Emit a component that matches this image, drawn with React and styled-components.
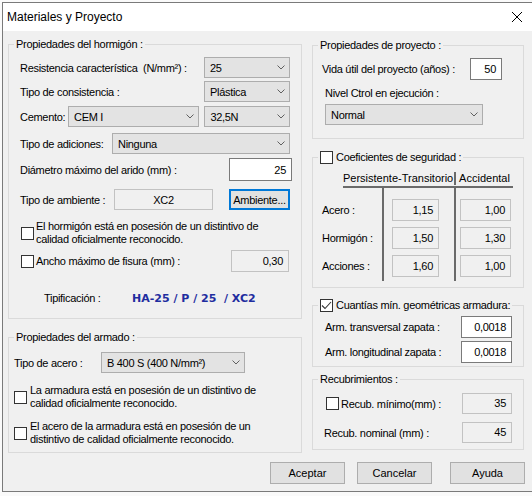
import React from "react"
import styled, { createGlobalStyle } from "styled-components"

const GlobalStyle = createGlobalStyle`
  html, body {
    margin: 0;
    padding: 0;
    background: #fafafa;
    overflow: hidden;
  }
  * { box-sizing: border-box; }
  body {
    font-family: "Liberation Sans", Arial, sans-serif;
    font-size: 11px;
    color: #000;
  }
`

const Window = styled.div`
  margin: 2px 0 0 2px;
  width: 538px;
  height: 490px;
  border: 1px solid #7a7a7a;
  border-right: none;
  background: #f0f0f0;
  display: flex;
  flex-direction: column;
`

const TitleBar = styled.div`
  height: 28px;
  background: #fff;
  display: flex;
  align-items: center;
  justify-content: space-between;
  padding-left: 4px;
  font-size: 12px;
`

const CloseButton = styled.div`
  width: 46px;
  height: 28px;
  display: flex;
  align-items: center;
  justify-content: center;
`

const Body = styled.div`
  padding: 6px 0 0 5px;
  display: flex;
  flex-direction: column;
  letter-spacing: -0.3px;
`

const Columns = styled.div`
  display: flex;
  gap: 10px;
  align-items: flex-start;
`

const Column = styled.div`
  width: ${p => p.$w}px;
  margin-top: ${p => p.$mt || 0}px;
  display: flex;
  flex-direction: column;
`

const Group = styled.fieldset`
  margin: ${p => p.$mt || 0}px 0 0;
  padding: 0 ${p => p.$pr || 0}px ${p => p.$pb || 0}px ${p => p.$pl || 0}px;
  border: 1px solid #dadada;
  min-width: 0;
`

// legend sits at the content edge, so the offset undoes the group's padding
const Legend = styled.legend`
  margin-left: ${p => p.$ml ?? 0}px;
  padding: 0 2px;
  height: 14px;
  line-height: 14px;
  display: flex;
  align-items: center;
  gap: 3px;
  white-space: nowrap;
`

const Row = styled.div`
  display: flex;
  align-items: center;
  height: ${p => p.$h || 21}px;
  margin-top: ${p => p.$mt || 0}px;
  padding-left: ${p => p.$indent || 0}px;
  gap: ${p => p.$gap || 0}px;
  white-space: nowrap;
`

const Label = styled.span`
  width: ${p => (p.$w ? `${p.$w}px` : "auto")};
  flex: ${p => (p.$w ? "none" : "1")};
  margin-left: ${p => p.$ml || 0}px;
`

const ComboBox = styled.div`
  width: ${p => p.$w}px;
  height: 21px;
  margin-left: ${p => p.$ml || 0}px;
  border: 1px solid #adadad;
  background: #e3e3e3;
  display: flex;
  align-items: center;
  justify-content: space-between;
  padding: 0 4px 0 5px;
`

const TextBox = styled.div`
  width: ${p => p.$w}px;
  height: ${p => p.$h || 22}px;
  margin-right: ${p => p.$mr || 0}px;
  border: 1px solid ${p => (p.$readonly ? "#c2c2c2" : "#7a7a7a")};
  background: ${p => (p.$readonly ? "#f0f0f0" : "#fff")};
  display: flex;
  align-items: ${p => (p.$top ? "flex-start" : "center")};
  justify-content: ${p => (p.$center ? "center" : "flex-end")};
  padding: ${p => (p.$top ? "3px" : "0")} 5px 0 5px;
`

const Button = styled.div`
  width: ${p => p.$w || 75}px;
  height: ${p => p.$h || 22}px;
  margin-left: ${p => p.$ml || 0}px;
  border: ${p => (p.$focused ? "2px solid #0078d7" : "1px solid #adadad")};
  background: #e1e1e1;
  display: flex;
  align-items: center;
  justify-content: center;
`

const Box = styled.span`
  width: 13px;
  height: 13px;
  flex: none;
  margin-left: ${p => p.$ml || 0}px;
  margin-right: ${p => p.$mr || 0}px;
  border: 1px solid #333;
  background: #fff;
  display: flex;
  align-items: center;
  justify-content: center;
`

const TwoLines = styled.span`
  line-height: 13px;
  white-space: normal;
`

const Typing = styled.span`
  font-family: "DejaVu Sans", Verdana, sans-serif;
  font-weight: bold;
  font-size: 11px;
  letter-spacing: 0;
  color: #1f2d9f;
  white-space: pre;
`

const CoefHeader = styled.div`
  display: flex;
  width: 170px;
  height: 16px;
  margin: 8px 0 0 21px;
  border-bottom: 2px solid #6a6a6a;
`

const HeadCell = styled.div`
  width: ${p => p.$w}px;
  height: 13px;
  line-height: 13px;
  border-right: ${p => (p.$line ? "2px solid #6a6a6a" : "none")};
  text-align: ${p => (p.$line ? "right" : "center")};
  padding-right: ${p => (p.$line ? 5 : 0)}px;
  white-space: nowrap;
  letter-spacing: 0;
`

const CoefBody = styled.div`
  display: flex;
`

const CoefColumn = styled.div`
  width: ${p => p.$w}px;
  padding: 11px 0 4px ${p => p.$pl || 0}px;
  border-right: ${p => (p.$line ? "2px solid #6a6a6a" : "none")};
  display: flex;
  flex-direction: column;
  gap: 6px;
`

const CoefLabel = styled.div`
  height: 22px;
  display: flex;
  align-items: center;
`

const ButtonBar = styled.div`
  display: flex;
  margin-top: 9px;
  padding-left: 262px;
  gap: 12px;
  letter-spacing: 0;
`

const Chevron = () => (
  <svg width="8" height="5" viewBox="0 0 8 5">
    <polyline points="0.5,0.5 4,4 7.5,0.5" fill="none" stroke="#606060" strokeWidth="1" />
  </svg>
)

const Combo = ({ w, ml, children }) => (
  <ComboBox $w={w} $ml={ml}>
    <span>{children}</span>
    <Chevron />
  </ComboBox>
)

const Check = ({ checked, ml, mr }) => (
  <Box $ml={ml} $mr={mr}>
    {checked && (
      <svg width="11" height="9" viewBox="0 0 11 9">
        <polyline points="1,4.5 4,7.5 10,1" fill="none" stroke="#333" strokeWidth="1.1" />
      </svg>
    )}
  </Box>
)

const coefRows = [
  { label: "Acero :", pt: "1,15", acc: "1,00" },
  { label: "Hormigón :", pt: "1,50", acc: "1,30" },
  { label: "Acciones :", pt: "1,60", acc: "1,00" },
]

const App = () => (
  <>
    <GlobalStyle />
    <Window>
      <TitleBar>
        <span>Materiales y Proyecto</span>
        <CloseButton>
          <svg width="10" height="10" viewBox="0 0 10 10">
            <path d="M0 0 L10 10 M10 0 L0 10" stroke="#000" strokeWidth="1" />
          </svg>
        </CloseButton>
      </TitleBar>
      <Body>
        <Columns>
          <Column $w={294}>
            <Group $pl={11} $pr={11} $pb={10}>
              <Legend $ml={-6}>Propiedades del hormigón :</Legend>
              <Row $mt={6}>
                <Label>Resistencia característica&nbsp; (N/mm²) :</Label>
                <Combo w={86}>25</Combo>
              </Row>
              <Row $mt={3}>
                <Label>Tipo de consistencia :</Label>
                <Combo w={86}>Plástica</Combo>
              </Row>
              <Row $mt={4}>
                <Label $w={48}>Cemento:</Label>
                <Combo w={132}>CEM I</Combo>
                <Combo w={86} ml={5}>32,5N</Combo>
              </Row>
              <Row $mt={6}>
                <Label $w={92}>Tipo de adiciones:</Label>
                <Combo w={178}>Ninguna</Combo>
              </Row>
              <Row $mt={4} $h={23}>
                <Label>Diámetro máximo del arido (mm) :</Label>
                <TextBox $w={63} $h={23} $mr={-2}>25</TextBox>
              </Row>
              <Row $mt={8}>
                <Label $w={94}>Tipo de ambiente :</Label>
                <TextBox $w={99} $h={21} $readonly $center>XC2</TextBox>
                <Button $w={61} $h={21} $ml={16} $focused>Ambiente...</Button>
              </Row>
              <Row $mt={10} $h={26}>
                <Check ml={1} mr={2} />
                <TwoLines>
                  El hormigón está en posesión de un distintivo de
                  <br />
                  calidad oficialmente reconocido.
                </TwoLines>
              </Row>
              <Row $mt={4} $h={22}>
                <Check ml={1} mr={2} />
                <Label>Ancho máximo de fisura (mm) :</Label>
                <TextBox $w={58} $readonly $mr={1}>0,30</TextBox>
              </Row>
              <Row $mt={16} $h={20}>
                <Label $w={88} $ml={24}>Tipificación :</Label>
                <Typing>HA-25 / P / 25  / XC2</Typing>
              </Row>
            </Group>

            <Group $mt={11} $pl={5} $pr={5} $pb={6}>
              <Legend $ml={0}>Propiedades del armado :</Legend>
              <Row $mt={8}>
                <Label $w={87}>Tipo de acero :</Label>
                <Combo w={144}>B 400 S (400 N/mm²)</Combo>
              </Row>
              <Row $mt={11} $h={26}>
                <Check mr={3} />
                <TwoLines>
                  La armadura está en posesión de un distintivo de
                  <br />
                  calidad oficialmente reconocido.
                </TwoLines>
              </Row>
              <Row $mt={10} $h={26}>
                <Check mr={3} />
                <TwoLines>
                  El acero de la armadura está en posesión de un
                  <br />
                  distintivo de calidad oficialmente reconocido.
                </TwoLines>
              </Row>
            </Group>
          </Column>

          <Column $w={212} $mt={1}>
            <Group $pl={9} $pr={21} $pb={13}>
              <Legend $ml={-4}>Propiedades de proyecto :</Legend>
              <Row $mt={6} $h={22}>
                <Label>Vida útil del proyecto (años) :</Label>
                <TextBox $w={32}>50</TextBox>
              </Row>
              <Row $mt={6} $h={14} $indent={3}>
                <Label>Nivel Ctrol en ejecución :</Label>
              </Row>
              <Row $mt={4} $indent={3}>
                <Combo w={158}>Normal</Combo>
              </Row>
            </Group>

            <Group $mt={11} $pl={9} $pb={6}>
              <Legend $ml={-4}>
                <Check />
                <span>Coeficientes de seguridad :</span>
              </Legend>
              <CoefHeader>
                <HeadCell $w={113} $line>Persistente-Transitorio</HeadCell>
                <HeadCell $w={57}>Accidental</HeadCell>
              </CoefHeader>
              <CoefBody>
                <CoefColumn $w={62} $line>
                  {coefRows.map(r => (
                    <CoefLabel key={r.label}>{r.label}</CoefLabel>
                  ))}
                </CoefColumn>
                <CoefColumn $w={72} $pl={8} $line>
                  {coefRows.map(r => (
                    <TextBox key={r.label} $w={47} $readonly>{r.pt}</TextBox>
                  ))}
                </CoefColumn>
                <CoefColumn $w={57} $pl={4}>
                  {coefRows.map(r => (
                    <TextBox key={r.label} $w={51} $readonly>{r.acc}</TextBox>
                  ))}
                </CoefColumn>
              </CoefBody>
            </Group>

            <Group $mt={10} $pl={12} $pr={11} $pb={3}>
              <Legend $ml={-7}>
                <Check checked />
                <span>Cuantías mín. geométricas armadura:</span>
              </Legend>
              <Row $mt={4} $h={22}>
                <Label>Arm. transversal zapata :</Label>
                <TextBox $w={51}>0,0018</TextBox>
              </Row>
              <Row $mt={3} $h={22}>
                <Label>Arm. longitudinal zapata :</Label>
                <TextBox $w={51}>0,0018</TextBox>
              </Row>
            </Group>

            <Group $mt={5} $pl={11} $pr={11} $pb={6}>
              <Legend $ml={-6}>Recubrimientos :</Legend>
              <Row $mt={7}>
                <Check ml={2} mr={2} />
                <Label>Recub. mínimo(mm) :</Label>
                <TextBox $w={50} $h={21} $readonly $top>35</TextBox>
              </Row>
              <Row $mt={8}>
                <Label>Recub. nominal (mm) :</Label>
                <TextBox $w={50} $h={21} $readonly $top>45</TextBox>
              </Row>
            </Group>
          </Column>
        </Columns>

        <ButtonBar>
          <Button>Aceptar</Button>
          <Button>Cancelar</Button>
          <Button $ml={6}>Ayuda</Button>
        </ButtonBar>
      </Body>
    </Window>
  </>
)

export default App
